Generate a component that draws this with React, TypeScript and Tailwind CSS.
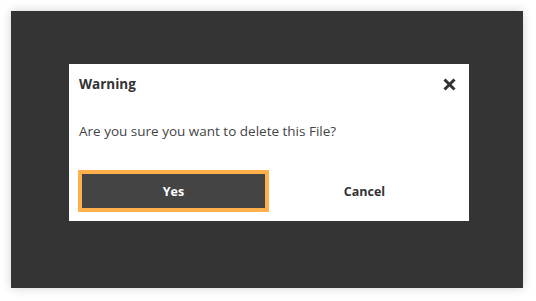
export default function App() {
  return (
    <div className="w-[536px] h-[301px] bg-white pt-[11px] pl-[11px]" style={{ fontFamily: '"Open Sans", sans-serif' }}>
      <div className="w-[512px] h-[277px] bg-[#343434] shadow-[0_0_10px_rgba(0,0,0,0.18)] flex justify-center pt-[53px] pl-[4px]">
        <div className="w-[400px] h-[157px] bg-white flex flex-col">
          {/* Header */}
          <div className="h-[40px] flex items-center justify-between pl-[10px] pr-[13px]">
            <span className="text-[13.5px] font-bold text-[#333]">Warning</span>
            <button className="w-[13px] h-[13px] flex items-center justify-center">
              <svg width="13" height="13" viewBox="0 0 13 13">
                <path d="M1.5 1.5 L11.5 11.5 M11.5 1.5 L1.5 11.5" stroke="#333" strokeWidth="3" strokeLinecap="butt" />
              </svg>
            </button>
          </div>

          {/* Body */}
          <p className="pt-[17px] pl-[10px] text-[13.5px] leading-[20px] text-[#444]">
            Are you sure you want to delete this File?
          </p>

          {/* Actions */}
          <div className="mt-[29px] px-[9px] flex">
            <button className="w-[191px] h-[42px] pt-[2px] border-4 border-[#ffb04d] bg-[#444] text-white text-[12.5px] font-bold">
              Yes
            </button>
            <button className="w-[191px] h-[42px] pt-[2px] bg-white text-[#333] text-[12.5px] font-bold">
              Cancel
            </button>
          </div>
        </div>
      </div>
    </div>
  )
}
